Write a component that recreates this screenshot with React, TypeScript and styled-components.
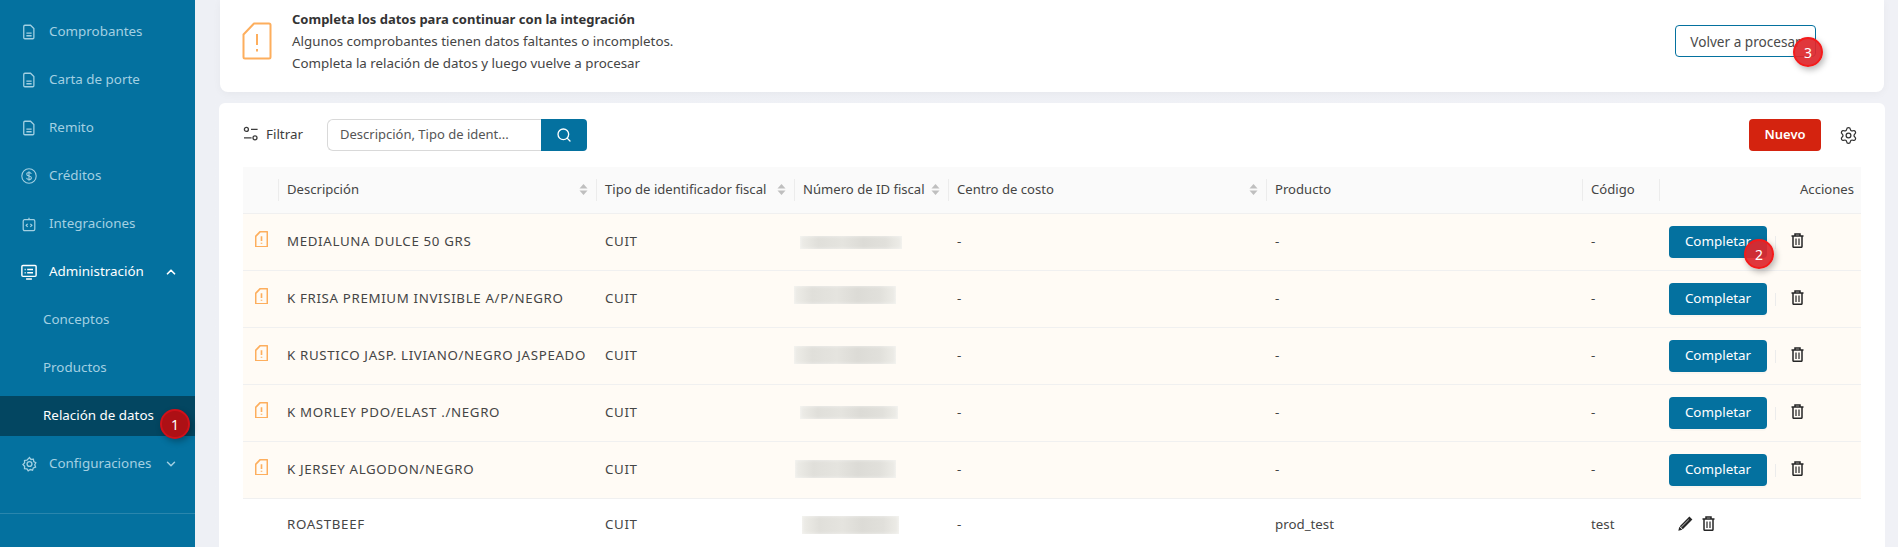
import { createGlobalStyle, styled } from 'styled-components'
import { ChevronDown, ChevronUp, Search, Settings } from 'lucide-react'

const GlobalStyle = createGlobalStyle`
  html, body {
    margin: 0;
    height: 100%;
    overflow: hidden;
    background: #f0f1f6;
    font-family: 'Noto Sans', 'Open Sans', sans-serif;
    font-size: 13px;
    color: #3d3d3d;
  }
  #root { height: 100%; }
`

const DocIcon = () => (
  <svg width="12" height="16" viewBox="0 0 16 20" fill="none" stroke="currentColor" strokeWidth="1.7">
    <path d="M2.5 1h7.5l4.5 4.5v12a1.5 1.5 0 0 1-1.5 1.5h-10.5a1.5 1.5 0 0 1-1.5-1.5v-15a1.5 1.5 0 0 1 1.5-1.5z" />
    <path d="M4.5 11.5h7M4.5 15h7" />
  </svg>
)

const CoinIcon = () => (
  <svg width="16" height="16" viewBox="0 0 22 22" fill="none" stroke="currentColor" strokeWidth="1.5">
    <circle cx="11" cy="11" r="9.9" />
    <path d="M14.2 8.2c-.4-1.3-1.6-2-3.2-2-1.8 0-3.1.9-3.1 2.4 0 3.4 6.4 1.5 6.4 4.9 0 1.5-1.4 2.4-3.3 2.4-1.7 0-3-.8-3.4-2.2M11 4.4v13.2" />
  </svg>
)

const PlugIcon = () => (
  <svg width="14" height="15" viewBox="0 0 20 22" fill="none" stroke="currentColor" strokeWidth="1.8">
    <rect x="1.5" y="4" width="17" height="16" rx="2" />
    <path d="M10 1v3M8 10l-2.2 2.2L8 14.4M12 10l2.2 2.2L12 14.4" />
  </svg>
)

const ScreenIcon = () => (
  <svg width="16" height="16" viewBox="0 0 22 22" fill="none" stroke="currentColor" strokeWidth="2">
    <rect x="1.2" y="2" width="19.6" height="15" rx="1.5" />
    <path d="M8.5 7.5h8M8.5 12h8M5 7.5h1.4M5 12h1.4M7 20.5h8" />
  </svg>
)

const GearIcon = () => (
  <svg width="15" height="16" viewBox="0 0 22 22" fill="none" stroke="currentColor" strokeWidth="1.9">
    <path d="M11 1.6l2.2 2.8 3.5-.4.6 3.4 3 1.8-1.6 3 1.2 3.3-3.3 1.2-1.1 3.3-3.3-.9-3.1 1.9-1.9-2.9-3.5-.3.1-3.5-2.4-2.5 2.4-2.5-.1-3.5 3.5-.5z" />
    <circle cx="11" cy="11" r="3.6" />
  </svg>
)

const FilterIcon = () => (
  <svg width="16" height="16" viewBox="0 0 16 16" fill="none" stroke="#3d3d3d" strokeWidth="1.3">
    <circle cx="3.4" cy="3.4" r="2" />
    <path d="M8 3.4h6.6M1 11.8h7.6" />
    <circle cx="12" cy="11.8" r="2" />
  </svg>
)

const MissingIcon = ({ size }: { size: number }) => (
  <svg width={size} height={(size * 38) / 30} viewBox="0 0 30 38" fill="none" stroke="#fdae5d" strokeWidth={size > 20 ? 2 : 3.8}>
    <path d="M12 1.5h15a1.5 1.5 0 0 1 1.5 1.5v32a1.5 1.5 0 0 1-1.5 1.5h-24a1.5 1.5 0 0 1-1.5-1.5v-22.5z" strokeLinejoin="round" />
    <path d="M15 12v11M15 27v2.6" />
  </svg>
)

const SortIcon = () => (
  <svg width="9" height="13" viewBox="0 0 9 13" fill="#bfbfbf">
    <path d="M4.5 1L8.5 5.5H0.5zM4.5 12L0.5 7.5H8.5z" />
  </svg>
)

const TrashIcon = () => (
  <svg width="13" height="15" viewBox="0 0 13 15" fill="none" stroke="#262626" strokeWidth="1.5">
    <path d="M0.5 3h12M4 3V1h5v2" />
    <path d="M2 3v10.5a.8.8 0 0 0 .8.8h7.4a.8.8 0 0 0 .8-.8V3" />
    <path d="M5 5.5v6.5M8 5.5v6.5" strokeWidth="1.2" />
  </svg>
)

const PencilIcon = () => (
  <svg width="15" height="15" viewBox="0 0 15 15">
    <path d="M11.4 0.6l3 3-9.6 9.6-3 -3z" fill="#262626" />
    <path d="M1.3 10.7l3 3-4 1z" fill="#262626" />
    <path d="M3.2 11.2l7.6-7.6" stroke="#ffffff" strokeWidth="0.7" />
  </svg>
)

const Page = styled.div`
  display: flex;
  height: 547px;
  overflow: hidden;
`

const Sidebar = styled.aside`
  position: relative;
  width: 195px;
  flex: none;
  background: #04719f;
  padding-top: 8px;
  box-sizing: border-box;
`

const NavItem = styled.div<{ $open?: boolean; $sub?: boolean; $active?: boolean }>`
  display: flex;
  align-items: center;
  height: ${(p) => (p.$active ? '40px' : '48px')};
  margin: ${(p) => (p.$active ? '4px 0' : '0')};
  padding-left: ${(p) => (p.$sub ? '43px' : '49px')};
  padding-bottom: 2px;
  box-sizing: border-box;
  position: relative;
  font-size: 13.4px;
  color: ${(p) => (p.$open || p.$active ? '#ffffff' : '#a3d0e2')};
  background: ${(p) => (p.$active ? '#034661' : 'transparent')};
`

const NavIcon = styled.span`
  position: absolute;
  left: 18px;
  top: 50%;
  transform: translateY(-50%);
  width: 22px;
  height: 22px;
  display: flex;
  align-items: center;
  justify-content: center;
`

const NavChevron = styled.span`
  position: absolute;
  left: 164px;
  top: 50%;
  transform: translateY(-50%);
  display: flex;
`

const SideRule = styled.div`
  margin-top: 25px;
  height: 1px;
  background: #2a86ad;
`

const Main = styled.main`
  flex: 1;
  min-width: 0;
  display: flex;
  flex-direction: column;
  gap: 11px;
  padding: 0 13px 0 24px;
  background: linear-gradient(to right, #eef0f5, #f0f1f6);
`

const AlertCard = styled.section`
  position: relative;
  height: 92px;
  flex: none;
  margin-left: 1px;
  margin-right: 1px;
  display: flex;
  align-items: center;
  background: #fff;
  border-radius: 0 0 8px 8px;
  box-shadow: 0 2px 8px rgba(0, 0, 0, 0.04);
  padding: 0 25px 10px 22px;
  box-sizing: border-box;
`

const AlertText = styled.div`
  margin-left: 20px;
  font-size: 13.35px;
  line-height: 22px;
  flex: 1;
  color: #454545;
`

const AlertTitle = styled.div`
  font-size: 13px;
  font-weight: 700;
  color: #333;
  margin-top: -1px;
`

const OutlineButton = styled.button`
  margin-right: 43px;
  width: 141px;
  height: 32px;
  border: 1px solid #04719f;
  border-radius: 4px;
  background: #fff;
  color: #4a4a4a;
  font: inherit;
  font-size: 13.6px;
  padding: 0;
`

const TableCard = styled.section`
  flex: 1;
  background: #fff;
  border-radius: 6px 6px 0 0;
  padding: 16px 24px 0;
  min-height: 0;
`

const Toolbar = styled.div`
  display: flex;
  align-items: center;
  height: 32px;
  margin-bottom: 16px;
`

const FilterLabel = styled.span`
  display: flex;
  align-items: center;
  gap: 7px;
  font-size: 13.4px;
  width: 84px;
  flex: none;
  padding-bottom: 2px;
`

const SearchBox = styled.div`
  width: 214px;
  height: 32px;
  box-sizing: border-box;
  border: 1px solid #d9d9d9;
  border-right: none;
  border-radius: 6px 0 0 6px;
  padding-left: 12px;
  line-height: 28px;
  font-size: 13px;
  color: #555;
`

const SearchButton = styled.button`
  width: 46px;
  height: 32px;
  border: none;
  border-radius: 0 4px 4px 0;
  background: #04719f;
  color: #fff;
  display: flex;
  align-items: center;
  justify-content: center;
  padding: 0;
`

const NewButton = styled.button`
  margin-left: auto;
  width: 72px;
  height: 32px;
  border: none;
  border-radius: 4px;
  background: #d4230f;
  color: #fff;
  font: inherit;
  font-size: 13px;
  font-weight: 600;
  padding: 0 0 2px;
`

const GearButton = styled.span`
  display: flex;
  margin: 0 3px 0 18px;
  color: #333;
`

const columns = '36px 318px 198px 154px 318px 316px 77px 201px'

const HeaderRow = styled.div`
  display: grid;
  grid-template-columns: ${columns};
  height: 47px;
  background: #fafafa;
  border-bottom: 1px solid #f0f0f0;
  box-sizing: border-box;
`

const HeaderCell = styled.div<{ $end?: boolean; $plain?: boolean }>`
  position: relative;
  display: flex;
  align-items: center;
  justify-content: ${(p) => (p.$end ? 'flex-end' : 'space-between')};
  padding: 0 ${(p) => (p.$end ? '7px' : '9px')} 2px 8px;
  font-size: 13.1px;
  white-space: nowrap;
  color: #454545;
  &::after {
    content: '';
    display: ${(p) => (p.$plain ? 'none' : 'block')};
    position: absolute;
    right: 0;
    top: 12px;
    height: 22px;
    width: 1px;
    background: #ececec;
  }
`

const Row = styled.div<{ $warn?: boolean; $short?: boolean }>`
  display: grid;
  grid-template-columns: ${columns};
  height: ${(p) => (p.$short ? '52px' : '57px')};
  align-items: center;
  background: ${(p) => (p.$warn ? '#fffbf5' : '#fff')};
  border-bottom: ${(p) => (p.$short ? 'none' : '1px solid #f0f0f0')};
  box-sizing: border-box;
`

const Cell = styled.div<{ $caps?: boolean }>`
  padding: 0 8px 2px;
  font-size: 13.3px;
  letter-spacing: ${(p) => (p.$caps ? '0.65px' : '0')};
  white-space: nowrap;
  color: #454545;
`

const IconCell = styled.div`
  display: flex;
  justify-content: center;
  margin-top: -6px;
`

const FiscalPatch = styled.div<{ $indent: number; $w: number; $h: number; $dy: number }>`
  margin-left: ${(p) => p.$indent}px;
  margin-top: ${(p) => p.$dy * 2}px;
  width: ${(p) => p.$w}px;
  height: ${(p) => p.$h}px;
  background: linear-gradient(90deg, #eeede8, #e0dfda 18%, #e5e4df 42%, #dcdbd6 62%, #e1e0db 84%, #eeede8);
  box-shadow: inset 0 0 3px 1px rgba(255, 255, 255, 0.35);
`

const Actions = styled.div`
  display: flex;
  align-items: center;
  position: relative;
`

const CompleteButton = styled.button`
  margin-left: 9px;
  width: 98px;
  height: 32px;
  border: none;
  border-radius: 4px;
  background: #04719f;
  color: #fff;
  font: inherit;
  font-size: 13.4px;
  padding: 0 0 2px;
  box-shadow: 0 2px 0 rgba(0, 0, 0, 0.02);
`

const ActionRule = styled.span`
  width: 1px;
  height: 13px;
  margin-left: 8px;
  background: #ececec;
`

const IconSlot = styled.span<{ $gap: number }>`
  display: flex;
  margin-left: ${(p) => p.$gap}px;
  margin-top: -4px;
`

const Badge = styled.span<{ $dark?: boolean; $x: number; $y: number }>`
  position: absolute;
  left: ${(p) => p.$x - 15}px;
  top: ${(p) => p.$y - 15}px;
  width: 30px;
  height: 30px;
  box-sizing: border-box;
  border-radius: 50%;
  border: 2px solid ${(p) => (p.$dark ? '#d0111a' : '#f31b1b')};
  background: ${(p) => (p.$dark ? '#ad1015' : 'rgba(222, 40, 45, 0.93)')};
  color: #fff;
  font-size: 14px;
  display: flex;
  align-items: center;
  justify-content: center;
  box-shadow: 2px 3px 6px rgba(0, 0, 0, 0.28);
`

const rows = [
  { name: 'MEDIALUNA DULCE 50 GRS', indent: 5, w: 102, h: 13, dy: 0 },
  { name: 'K FRISA PREMIUM INVISIBLE A/P/NEGRO', indent: -1, w: 102, h: 18, dy: -4 },
  { name: 'K RUSTICO JASP. LIVIANO/NEGRO JASPEADO', indent: -1, w: 102, h: 18, dy: -1 },
  { name: 'K MORLEY PDO/ELAST ./NEGRO', indent: 5, w: 98, h: 13, dy: -1 },
  { name: 'K JERSEY ALGODON/NEGRO', indent: 0, w: 101, h: 18, dy: -1 },
]

export default function App() {
  return (
    <Page>
      <GlobalStyle />
      <Sidebar>
        <NavItem><NavIcon><DocIcon /></NavIcon>Comprobantes</NavItem>
        <NavItem><NavIcon><DocIcon /></NavIcon>Carta de porte</NavItem>
        <NavItem><NavIcon><DocIcon /></NavIcon>Remito</NavItem>
        <NavItem><NavIcon><CoinIcon /></NavIcon>Créditos</NavItem>
        <NavItem><NavIcon><PlugIcon /></NavIcon>Integraciones</NavItem>
        <NavItem $open>
          <NavIcon><ScreenIcon /></NavIcon>Administración
          <NavChevron><ChevronUp size={14} strokeWidth={3} /></NavChevron>
        </NavItem>
        <NavItem $sub>Conceptos</NavItem>
        <NavItem $sub>Productos</NavItem>
        <NavItem $sub $active>Relación de datos</NavItem>
        <NavItem>
          <NavIcon><GearIcon /></NavIcon>Configuraciones
          <NavChevron><ChevronDown size={14} strokeWidth={2.5} /></NavChevron>
        </NavItem>
        <SideRule />
        <Badge $dark $x={175} $y={424}>1</Badge>
      </Sidebar>
      <Main>
        <AlertCard>
          <MissingIcon size={30} />
          <AlertText>
            <AlertTitle>Completa los datos para continuar con la integración</AlertTitle>
            <div>Algunos comprobantes tienen datos faltantes o incompletos.</div>
            <div>Completa la relación de datos y luego vuelve a procesar</div>
          </AlertText>
          <OutlineButton>Volver a procesar</OutlineButton>
          <Badge $x={1588} $y={52}>3</Badge>
        </AlertCard>
        <TableCard>
          <Toolbar>
            <FilterLabel><FilterIcon />Filtrar</FilterLabel>
            <SearchBox>Descripción, Tipo de ident...</SearchBox>
            <SearchButton><Search size={16} /></SearchButton>
            <NewButton>Nuevo</NewButton>
            <GearButton><Settings size={19} strokeWidth={1.6} /></GearButton>
          </Toolbar>
          <HeaderRow>
            <HeaderCell />
            <HeaderCell>Descripción<SortIcon /></HeaderCell>
            <HeaderCell>Tipo de identificador fiscal<SortIcon /></HeaderCell>
            <HeaderCell>Número de ID fiscal<SortIcon /></HeaderCell>
            <HeaderCell>Centro de costo<SortIcon /></HeaderCell>
            <HeaderCell>Producto</HeaderCell>
            <HeaderCell>Código</HeaderCell>
            <HeaderCell $end $plain>Acciones</HeaderCell>
          </HeaderRow>
          {rows.map((row, i) => (
            <Row $warn key={row.name}>
              <IconCell><MissingIcon size={13} /></IconCell>
              <Cell $caps>{row.name}</Cell>
              <Cell $caps>CUIT</Cell>
              <FiscalPatch $indent={row.indent} $w={row.w} $h={row.h} $dy={row.dy} />
              <Cell>-</Cell>
              <Cell>-</Cell>
              <Cell>-</Cell>
              <Actions>
                <CompleteButton>Completar</CompleteButton>
                <ActionRule />
                <IconSlot $gap={15}><TrashIcon /></IconSlot>
                {i === 0 && <Badge $x={99} $y={28}>2</Badge>}
              </Actions>
            </Row>
          ))}
          <Row $short>
            <div />
            <Cell $caps>ROASTBEEF</Cell>
            <Cell $caps>CUIT</Cell>
            <FiscalPatch $indent={7} $w={97} $h={18} $dy={0} />
            <Cell>-</Cell>
            <Cell>prod_test</Cell>
            <Cell>test</Cell>
            <Actions>
              <IconSlot $gap={18}><PencilIcon /></IconSlot>
              <IconSlot $gap={9}><TrashIcon /></IconSlot>
            </Actions>
          </Row>
        </TableCard>
      </Main>
    </Page>
  )
}
